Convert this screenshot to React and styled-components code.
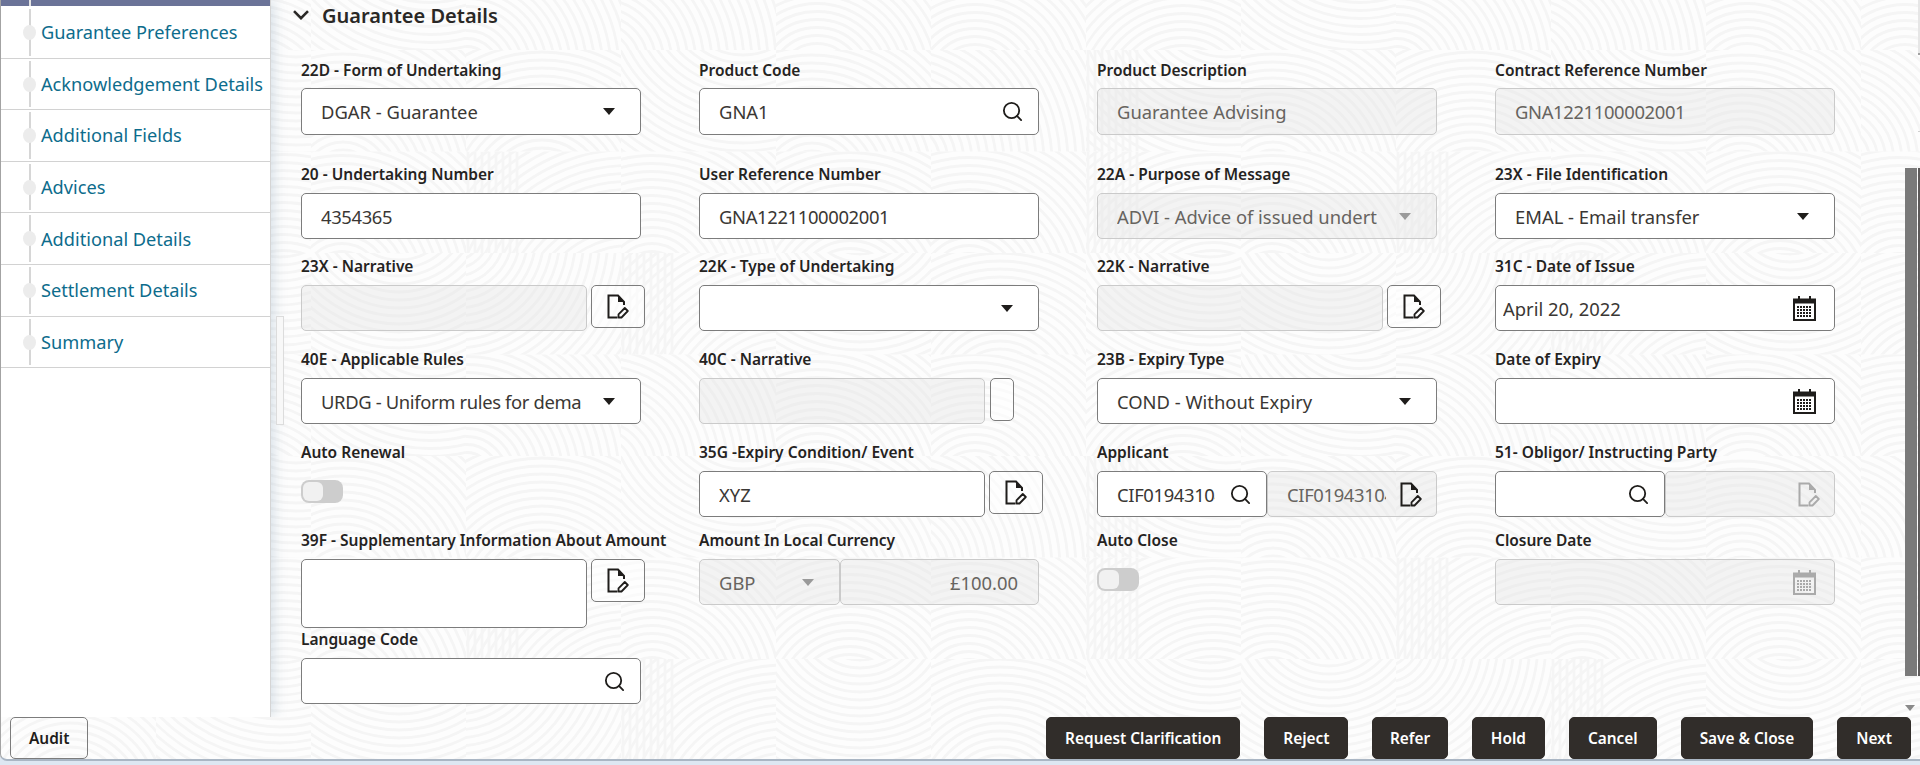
import React from 'react';
import styled, { createGlobalStyle } from 'styled-components';
import { Search } from 'lucide-react';

// watermark: tiles of clipped concentric arcs, like the fingerprint texture of the page
const buildWatermark = () => {
  const cellW = 155;
  const cellH = 101.5;
  let cells = '';
  for (let row = 0; row < 4; row++) {
    for (let col = 0; col < 6; col++) {
      const seed = Math.sin(col * 12.9 + row * 78.2) * 43758.5;
      const rnd = seed - Math.floor(seed);
      const cx = Math.round(rnd * cellW * 1.4 - cellW * 0.2);
      const above = (rnd * 7) % 1 > 0.5;
      const cy = above ? -Math.round(rnd * 70) - 10 : Math.round(cellH + rnd * 70 + 10);
      let rings = '';
      for (let r = 8; r < 340; r += 8) {
        rings += `<circle cx="${cx}" cy="${cy}" r="${r}"/>`;
      }
      if (rnd > 0.72) {
        for (let x = 2; x < cellW * 0.35; x += 7) {
          rings += `<path d="M${x} 0 V${cellH}"/>`;
        }
      }
      cells += `<svg x="${col * cellW}" y="${row * cellH}" width="${cellW}" height="${cellH}"><g fill="none" stroke="#f5f5f5" stroke-width="2.800">${rings}</g></svg>`;
    }
  }
  const svg = `<svg xmlns="http://www.w3.org/2000/svg" width="${cellW * 6}" height="${cellH * 4}">${cells}</svg>`;
  return `url("data:image/svg+xml,${encodeURIComponent(svg)}")`;
};

const watermark = buildWatermark();

const GlobalStyle = createGlobalStyle`
  html, body {
    margin: 0;
    height: 100%;
    background: #dde7f2;
    overflow: hidden;
  }
  * {
    box-sizing: border-box;
  }
  body {
    font-family: "Noto Sans", "Open Sans", Arial, sans-serif;
  }
`;

const Page = styled.div`
  position: relative;
  width: 1920px;
  height: 761px;
  display: flex;
  flex-direction: column;
  border-left: 1px solid #a3a3a3;
  border-bottom: 2px solid #aab6c4;
  border-bottom-left-radius: 7px;
  background-color: #fdfdfd;
  background-image: ${watermark};
  background-position: 0 50px;
  overflow: hidden;
`;

const Body = styled.div`
  position: relative;
  display: flex;
  height: 717px;
  overflow: hidden;
`;

const Sidebar = styled.nav`
  flex: 0 0 270px;
  background: #fff;
  border-right: 1px solid #d5d5d5;
  box-shadow: 3px 0 12px rgba(120, 150, 175, 0.28);
`;

const SideTop = styled.div`
  position: relative;
  height: 6px;
  margin-bottom: 1px;
  background: #6b7398;

  &::after {
    content: '';
    position: absolute;
    left: 28px;
    top: 0;
    width: 2px;
    height: 6px;
    background: #e4e4e4;
  }
`;

const NavItem = styled.div`
  position: relative;
  height: 51.6px;
  display: flex;
  align-items: center;
  padding-left: 40px;
  border-bottom: 1px solid #d2d2d2;
  font-size: 18.2px;
  color: #0d6c8c;
  white-space: nowrap;

  &::before {
    content: '';
    position: absolute;
    left: 28px;
    top: 2px;
    bottom: 2px;
    width: 2px;
    background: #d6d6d6;
  }

  &::after {
    content: '';
    position: absolute;
    left: 22px;
    top: 18px;
    width: 13px;
    height: 15px;
    border-radius: 50%;
    background: #ececec;
  }
`;

const Main = styled.main`
  flex: 1;
  min-width: 0;
  padding-left: 30px;
`;

const SectionHead = styled.div`
  height: 30px;
  display: flex;
  align-items: center;
  gap: 13px;
  margin-left: -8px;
  font-size: 20px;
  font-weight: 600;
  color: #2a2826;
`;

const Form = styled.div`
  display: grid;
  grid-template-columns: repeat(4, 340px);
  grid-template-rows: 104px 92px 93px 93px 88px 99px 76px;
  column-gap: 58px;
  margin-top: 28px;

  /* the first row sits one pixel tighter under its labels */
  & > div:nth-child(-n + 4) > div:first-child {
    margin-bottom: 8px;
  }
`;

const Field = styled.div`
  min-width: 0;
`;

const Label = styled.div`
  height: 22px;
  margin-bottom: 9px;
  font-size: 15.5px;
  line-height: 24px;
  font-weight: 600;
  color: #25231f;
  white-space: nowrap;
`;

const Row = styled.div`
  display: flex;
  gap: ${(p) => p.$gap ?? 0}px;
  align-items: flex-start;
`;

const Control = styled.div`
  flex: ${(p) => (p.$width ? `0 0 ${p.$width}px` : '1')};
  min-width: 0;
  height: ${(p) => p.$height ?? 46}px;
  display: flex;
  align-items: center;
  padding: 0 ${(p) => p.$right ?? 14}px 0 ${(p) => p.$left ?? 19}px;
  border: 1px solid ${(p) => (p.$off ? '#cacaca' : '#7c7c7c')};
  border-radius: 5px;
  background: ${(p) => (p.$off ? 'rgba(226, 226, 226, 0.38)' : '#fff')};
  color: ${(p) => (p.$off ? '#67645f' : '#3a3734')};
  font-size: 18.4px;
`;

const Value = styled.span`
  flex: 1;
  min-width: 0;
  overflow: hidden;
  white-space: nowrap;
  letter-spacing: ${(p) => (p.$tight ? '-0.35px' : 'normal')};
  text-align: ${(p) => (p.$end ? 'right' : 'left')};
`;

const Caret = styled.span`
  flex: none;
  width: 0;
  height: 0;
  margin-left: 22px;
  border-left: 6px solid transparent;
  border-right: 6px solid transparent;
  border-top: 7px solid ${(p) => (p.$off ? '#9a9a9a' : '#1f1d1b')};
`;

const IconSlot = styled.span`
  flex: none;
  display: flex;
  margin-left: 14px;
  color: ${(p) => (p.$off ? '#aaa' : '#1f1d1b')};
`;

const SideButton = styled.div`
  flex: 0 0 ${(p) => p.$width ?? 54}px;
  height: ${(p) => p.$height ?? 43}px;
  display: flex;
  align-items: center;
  justify-content: center;
  border: 1px solid #7c7c7c;
  border-radius: 5px;
  background: rgba(255, 255, 255, 0.5);
  color: #1f1d1b;
`;

const Toggle = styled.div`
  width: 42px;
  height: 23px;
  margin-top: 18px;
  padding: 2px;
  border-radius: 8px;
  background: #cdcdcd;
`;

const Knob = styled.div`
  width: 20px;
  height: 19px;
  border-radius: 6px;
  background: #f1f1f1;
`;

const ScrollHint = styled.div`
  position: absolute;
  left: 275px;
  top: 316px;
  width: 8px;
  height: 109px;
  background: #f8f8f8;
  border: 1px solid #dcdcdc;
`;

const ScrollThumb = styled.div`
  position: absolute;
  right: 3px;
  top: 168px;
  width: 12px;
  height: 508px;
  background: #7a7a7a;
`;

const EdgeLine = styled.div`
  position: absolute;
  right: 0;
  top: ${(p) => p.$top}px;
  width: 2px;
  height: ${(p) => p.$height}px;
  background: ${(p) => p.$color};
`;

const ScrollArrow = styled.div`
  position: absolute;
  right: 5px;
  top: 705px;
  border-left: 5px solid transparent;
  border-right: 5px solid transparent;
  border-top: 6px solid #8a8a8a;
`;

const Footer = styled.footer`
  height: 42px;
  display: flex;
  align-items: center;
  justify-content: space-between;
  padding: 0 9px;
`;

const FooterGroup = styled.div`
  display: flex;
  gap: 24px;
`;

const Button = styled.button`
  height: 42px;
  padding: 0 ${(p) => p.$pad ?? 18}px;
  border: 1px solid ${(p) => (p.$light ? '#7c7c7c' : '#312d2a')};
  border-radius: 5px;
  background: ${(p) => (p.$light ? 'transparent' : '#312d2a')};
  color: ${(p) => (p.$light ? '#1f1d1b' : '#fff')};
  font-family: inherit;
  font-size: 15.4px;
  font-weight: 600;
`;

const EditIcon = ({ color = 'currentColor' }) => (
  <svg width="22" height="25" viewBox="0 0 22 25" fill="none">
    <path d="M10.500 23.500H1.500V1.500H11L17 8v3" stroke={color} strokeWidth="2" />
    <path d="M11 1.500 17 8h-6z" fill={color} />
    <path d="M11.500 23.500v-3.200l6.300-6.300 3 3-6.300 6.500z" stroke={color} strokeWidth="1.800" strokeLinejoin="round" />
  </svg>
);

const CalendarIcon = ({ color = 'currentColor' }) => (
  <svg width="23" height="25" viewBox="0 0 23 25" fill="none">
    <path d="M6 0v6M17 0v6" stroke={color} strokeWidth="2" />
    <rect x="1" y="3.500" width="21" height="20.500" stroke={color} strokeWidth="2" />
    <rect x="1" y="3.500" width="21" height="4" fill={color} />
    <path d="M4 11h15M4 14h15M4 17h15M4 20h15" stroke={color} strokeWidth="2" strokeDasharray="2 1" />
  </svg>
);

const Chevron = () => (
  <svg width="16" height="10" viewBox="0 0 16 10" fill="none">
    <path d="M1 1.200l7 7 7-7" stroke="#2a2826" strokeWidth="2.600" />
  </svg>
);

const SearchIcon = () => <Search size={23} strokeWidth={1.9} />;

const Text = ({ value, off, tight }) => (
  <Control $off={off}>
    <Value $tight={tight}>{value}</Value>
  </Control>
);

const Select = ({ value, off, height, tight }) => (
  <Control $off={off} $right={25} $height={height}>
    <Value $tight={tight}>{value}</Value>
    <Caret $off={off} />
  </Control>
);

const Lookup = ({ value, width, height, tight }) => (
  <Control $width={width} $height={height}>
    <Value $tight={tight}>{value}</Value>
    <IconSlot>
      <SearchIcon />
    </IconSlot>
  </Control>
);

const DateBox = ({ value, off }) => (
  <Control $off={off} $left={7} $right={18}>
    <Value>{value}</Value>
    <IconSlot $off={off}>
      <CalendarIcon />
    </IconSlot>
  </Control>
);

const Narrative = ({ value, off, height }) => (
  <Row $gap={4}>
    <Control $width={286} $off={off} $height={height}>
      <Value>{value}</Value>
    </Control>
    <SideButton>
      <EditIcon />
    </SideButton>
  </Row>
);

const navItems = [
  'Guarantee Preferences',
  'Acknowledgement Details',
  'Additional Fields',
  'Advices',
  'Additional Details',
  'Settlement Details',
  'Summary',
];

const App = () => (
  <Page>
    <GlobalStyle />
    <Body>
      <Sidebar>
        <SideTop />
        {navItems.map((item) => (
          <NavItem key={item}>{item}</NavItem>
        ))}
      </Sidebar>
      <Main>
        <SectionHead>
          <Chevron />
          Guarantee Details
        </SectionHead>
        <Form>
          <Field>
            <Label>22D - Form of Undertaking</Label>
            <Select value="DGAR - Guarantee" height={47} />
          </Field>
          <Field>
            <Label>Product Code</Label>
            <Lookup value="GNA1" height={47} />
          </Field>
          <Field>
            <Label>Product Description</Label>
            <Control $off $height={47}>
              <Value>Guarantee Advising</Value>
            </Control>
          </Field>
          <Field>
            <Label>Contract Reference Number</Label>
            <Control $off $height={47}>
              <Value $tight>GNA1221100002001</Value>
            </Control>
          </Field>

          <Field>
            <Label>20 - Undertaking Number</Label>
            <Text value="4354365" tight />
          </Field>
          <Field>
            <Label>User Reference Number</Label>
            <Text value="GNA1221100002001" tight />
          </Field>
          <Field>
            <Label>22A - Purpose of Message</Label>
            <Select value="ADVI - Advice of issued undertaking" off />
          </Field>
          <Field>
            <Label>23X - File Identification</Label>
            <Select value="EMAL - Email transfer" />
          </Field>

          <Field>
            <Label>23X - Narrative</Label>
            <Narrative off />
          </Field>
          <Field>
            <Label>22K - Type of Undertaking</Label>
            <Select />
          </Field>
          <Field>
            <Label>22K - Narrative</Label>
            <Narrative off />
          </Field>
          <Field>
            <Label>31C - Date of Issue</Label>
            <DateBox value="April 20, 2022" />
          </Field>

          <Field>
            <Label>40E - Applicable Rules</Label>
            <Select value="URDG - Uniform rules for demand guarantees" tight />
          </Field>
          <Field>
            <Label>40C - Narrative</Label>
            <Row $gap={5}>
              <Control $width={286} $off />
              <SideButton $width={24} />
            </Row>
          </Field>
          <Field>
            <Label>23B - Expiry Type</Label>
            <Select value="COND - Without Expiry" />
          </Field>
          <Field>
            <Label>Date of Expiry</Label>
            <DateBox />
          </Field>

          <Field>
            <Label>Auto Renewal</Label>
            <Toggle>
              <Knob />
            </Toggle>
          </Field>
          <Field>
            <Label>35G -Expiry Condition/ Event</Label>
            <Narrative value="XYZ" />
          </Field>
          <Field>
            <Label>Applicant</Label>
            <Row>
              <Lookup value="CIF01943104" width={170} tight />
              <Control $off>
                <Value $tight>CIF01943104</Value>
                <IconSlot>
                  <EditIcon />
                </IconSlot>
              </Control>
            </Row>
          </Field>
          <Field>
            <Label>51- Obligor/ Instructing Party</Label>
            <Row>
              <Lookup width={170} />
              <Control $off>
                <Value />
                <IconSlot $off>
                  <EditIcon />
                </IconSlot>
              </Control>
            </Row>
          </Field>

          <Field>
            <Label>39F - Supplementary Information About Amount</Label>
            <Narrative height={69} />
          </Field>
          <Field>
            <Label>Amount In Local Currency</Label>
            <Row>
              <Control $width={141} $off $right={25}>
                <Value>GBP</Value>
                <Caret $off />
              </Control>
              <Control $off $right={20}>
                <Value $end>£100.00</Value>
              </Control>
            </Row>
          </Field>
          <Field>
            <Label>Auto Close</Label>
            <Toggle>
              <Knob />
            </Toggle>
          </Field>
          <Field>
            <Label>Closure Date</Label>
            <DateBox off />
          </Field>

          <Field>
            <Label>Language Code</Label>
            <Lookup />
          </Field>
        </Form>
      </Main>
      <ScrollHint />
      <ScrollThumb />
      <EdgeLine $top={168} $height={508} $color="#5d5a5a" />
      <EdgeLine $top={0} $height={53} $color="#e6e6e6" />
      <EdgeLine $top={53} $height={2} $color="#a0a0a0" />
      <EdgeLine $top={131} $height={1} $color="#d0d0d0" />
      <ScrollArrow />
    </Body>
    <Footer>
      <Button $light>Audit</Button>
      <FooterGroup>
        <Button>Request Clarification</Button>
        <Button>Reject</Button>
        <Button $pad={16.5}>Refer</Button>
        <Button>Hold</Button>
        <Button>Cancel</Button>
        <Button>Save &amp; Close</Button>
        <Button>Next</Button>
      </FooterGroup>
    </Footer>
  </Page>
);

export default App;
